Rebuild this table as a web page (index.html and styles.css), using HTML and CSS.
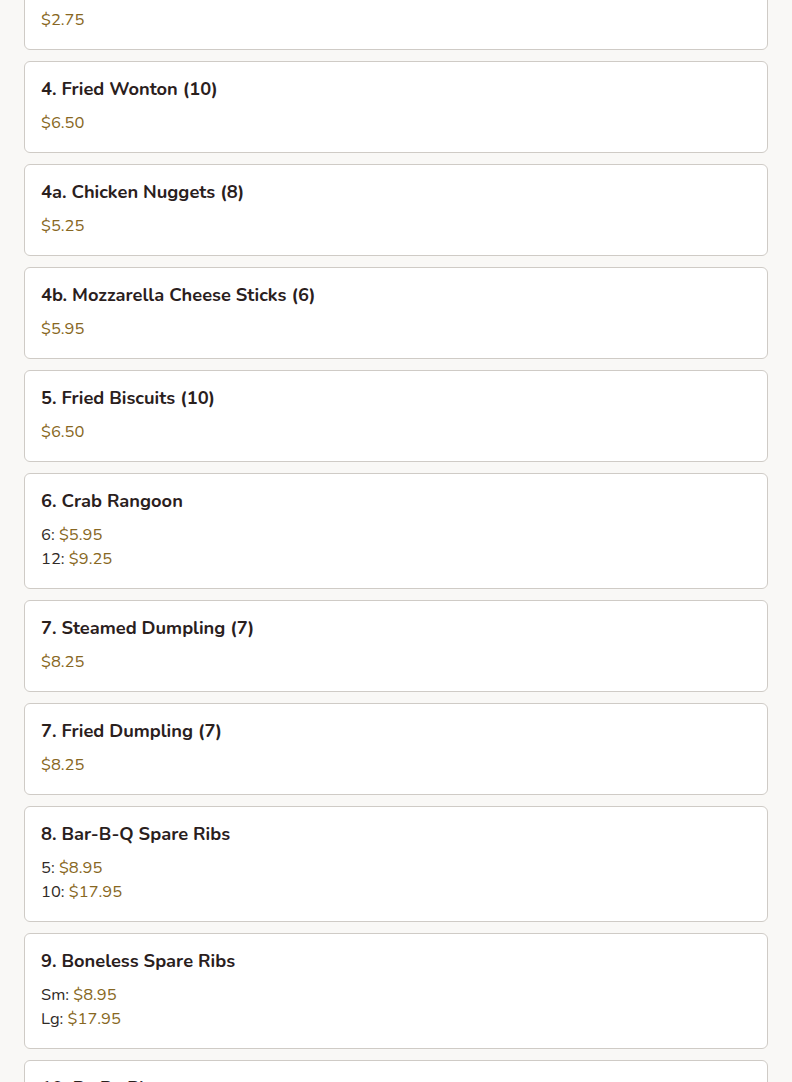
FILE: index.html
```html
<!DOCTYPE html>
<html lang="en">
<head>
<meta charset="utf-8">
<title>Menu</title>
<link rel="stylesheet" href="styles.css">
</head>
<body>
<main class="menu">
  <div class="card">
    <h3 class="name">3. Egg Roll (1)</h3>
    <div class="price">$2.75</div>
  </div>
  <div class="card">
    <h3 class="name">4. Fried Wonton (10)</h3>
    <div class="price">$6.50</div>
  </div>
  <div class="card">
    <h3 class="name">4a. Chicken Nuggets (8)</h3>
    <div class="price">$5.25</div>
  </div>
  <div class="card">
    <h3 class="name">4b. Mozzarella Cheese Sticks (6)</h3>
    <div class="price">$5.95</div>
  </div>
  <div class="card">
    <h3 class="name">5. Fried Biscuits (10)</h3>
    <div class="price">$6.50</div>
  </div>
  <div class="card">
    <h3 class="name">6. Crab Rangoon</h3>
    <div class="opt">6: <span class="price">$5.95</span></div>
    <div class="opt">12: <span class="price">$9.25</span></div>
  </div>
  <div class="card">
    <h3 class="name">7. Steamed Dumpling (7)</h3>
    <div class="price">$8.25</div>
  </div>
  <div class="card">
    <h3 class="name">7. Fried Dumpling (7)</h3>
    <div class="price">$8.25</div>
  </div>
  <div class="card">
    <h3 class="name">8. Bar-B-Q Spare Ribs</h3>
    <div class="opt">5: <span class="price">$8.95</span></div>
    <div class="opt">10: <span class="price">$17.95</span></div>
  </div>
  <div class="card">
    <h3 class="name">9. Boneless Spare Ribs</h3>
    <div class="opt">Sm: <span class="price">$8.95</span></div>
    <div class="opt">Lg: <span class="price">$17.95</span></div>
  </div>
  <div class="card">
    <h3 class="name">10. Pu Pu Platter</h3>
    <div class="price">$15.95</div>
  </div>
</main>
</body>
</html>
```
FILE: styles.css
```css
html, body {
  margin: 0;
  padding: 0;
  background: #f9f8f6;
}
body {
  font-family: "Nunito", "Lato", "Noto Sans", sans-serif;
  color: #2b2320;
  overflow: hidden;
}
.menu {
  display: flex;
  flex-direction: column;
  gap: 11px;
  padding: 0 24px;
  margin-top: -42px;
}
.card {
  background: #fff;
  border: 1px solid #cfcbc6;
  border-radius: 6px;
  padding: 14px 16px 17px;
}
.name {
  margin: 0 0 8px;
  font-size: 18.3px;
  font-weight: 700;
  line-height: 27px;
  color: #2a201d;
}
.price {
  color: #876722;
  font-size: 16.5px;
  line-height: 24px;
}
.opt {
  font-size: 16.5px;
  line-height: 24px;
  color: #2f2a27;
}
```
